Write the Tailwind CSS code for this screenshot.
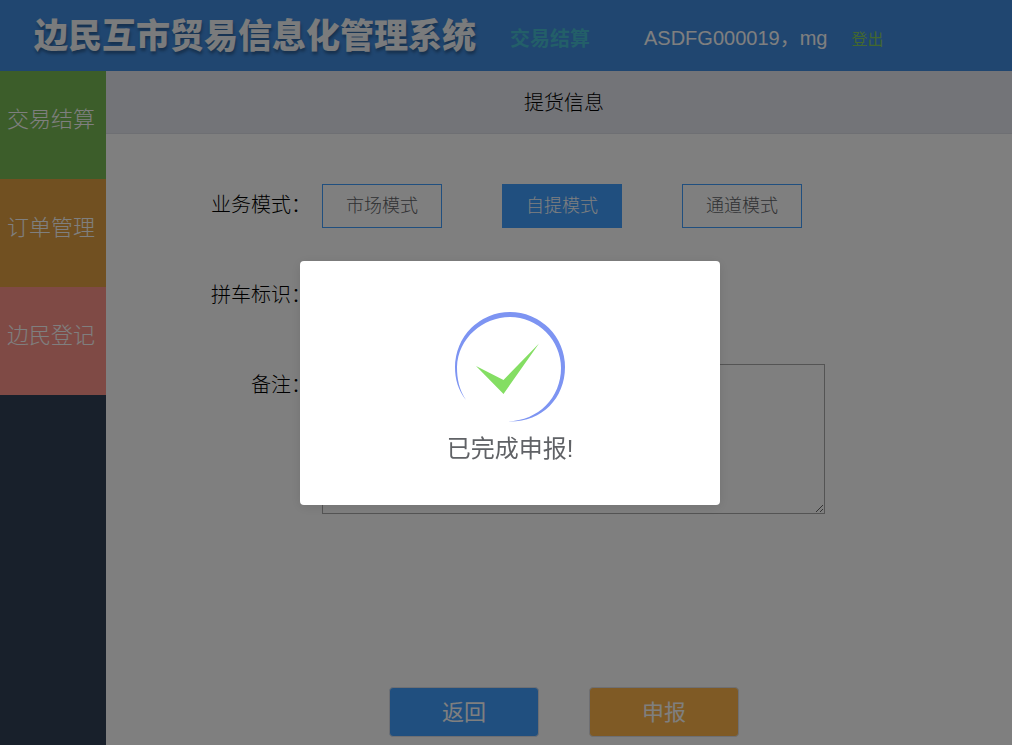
<!DOCTYPE html>
<html lang="zh-CN">
<head>
<meta charset="utf-8">
<meta name="viewport" content="width=device-width, initial-scale=1">
<title>边民互市贸易信息化管理系统</title>
<script src="https://cdn.jsdelivr.net/npm/@tailwindcss/browser@4"></script>
</head>
<body class="min-h-screen overflow-hidden bg-white font-['Liberation_Sans','Noto_Sans_CJK_SC',sans-serif] text-black">
<div class="flex min-h-screen flex-col">
  <header class="flex h-[71px] items-center bg-[#408ce0] pl-[34px] text-white">
    <h1 class="shrink-0 whitespace-nowrap text-[34px] font-black leading-10 text-[#f4f6f8] [text-shadow:1px_3px_3px_rgb(0_0_0/0.3)]">边民互市贸易信息化管理系统</h1>
    <a href="#" class="ml-[34px] mt-1.5 shrink-0 text-xl font-bold text-[#46bed2]">交易结算</a>
    <span class="ml-[54px] mt-1 shrink-0 whitespace-nowrap text-xl">ASDFG000019，mg</span>
    <a href="#" class="ml-6 mt-2 shrink-0 text-base text-[#85ce61]">登出</a>
  </header>
  <div class="flex grow">
    <nav class="flex w-[106px] shrink-0 flex-col bg-[#304156] text-[22px] text-white">
      <a href="#" class="flex h-[108px] items-center bg-[#78ba54] pb-3 pl-[7px] font-light">交易结算</a>
      <a href="#" class="flex h-[108px] items-center bg-[#e2a042] pb-3 pl-[7px] font-light">订单管理</a>
      <a href="#" class="flex h-[108px] items-center bg-[#ff958b] pb-3 pl-[7px] font-light">边民登记</a>
    </nav>
    <main class="flex grow flex-col">
      <h2 class="flex h-[63px] items-center justify-center border-b border-[#dcdfe6] bg-[#e6e8f0] pl-2.5 pt-0.5 text-xl font-light">提货信息</h2>
      <form class="flex grow flex-col pl-[105px] pt-[50px] text-xl font-light">
        <div class="flex h-[90px] gap-[11px]" role="group" aria-labelledby="mode">
          <span id="mode" class="w-[100px] shrink-0 text-right leading-[42px]">业务模式：</span>
          <div class="flex h-11 gap-[60px] text-lg">
            <button type="button" class="w-[120px] border border-[#409eff] text-[#606266]">市场模式</button>
            <button type="button" aria-pressed="true" class="w-[120px] border border-[#409eff] bg-[#409eff] text-white">自提模式</button>
            <button type="button" class="w-[120px] border border-[#409eff] text-[#606266]">通道模式</button>
          </div>
        </div>
        <div class="flex h-[90px]">
          <span class="w-[100px] shrink-0 text-right leading-[42px]">拼车标识：</span>
        </div>
        <div class="flex items-start gap-[11px]">
          <label for="remark" class="w-[100px] shrink-0 text-right leading-[42px]">备注：</label>
          <textarea id="remark" class="h-[150px] w-[503px] resize border border-[#a9a9a9] p-1 text-base"></textarea>
        </div>
        <div class="mb-2 mt-auto flex gap-[50px] pl-[178px] text-[22px] font-normal text-white">
          <button type="button" class="h-[50px] w-[150px] rounded border border-[#dcdfe6] bg-[#409eff] pt-0.5">返回</button>
          <button type="button" class="h-[50px] w-[150px] rounded border border-[#dcdfe6] bg-[#ffb54a] pt-0.5">申报</button>
        </div>
      </form>
    </main>
  </div>
</div>

<div class="fixed inset-0 flex items-center justify-center bg-black/50 pl-2 pt-[21px]">
  <div role="dialog" aria-modal="true" aria-labelledby="message" class="flex h-[244px] w-[420px] flex-col items-center rounded bg-white pt-[50px] shadow-[0_2px_12px_rgb(0_0_0/0.1)]">
    <svg class="h-[112px] w-[112px]" viewBox="0 0 112 112" aria-hidden="true">
      <path fill="#7d94f2" d="M12 89 C4 79 1 68 1 56 A55 55 0 0 1 56 1 A55 55 0 0 1 111 56 C111 88 87 112 53 110.500 C84 110 107 87 107 57 A51.500 51.500 0 0 0 56 6 C29 6 4 27 3 56 C3 68 5 78 12 89 Z"/>
      <path fill="#84de63" d="M22 55 L49.500 69 L85 32.500 L49.500 83 Z"/>
    </svg>
    <p id="message" class="mt-2 text-2xl leading-9 text-[#606266]">已完成申报!</p>
  </div>
</div>
</body>
</html>
